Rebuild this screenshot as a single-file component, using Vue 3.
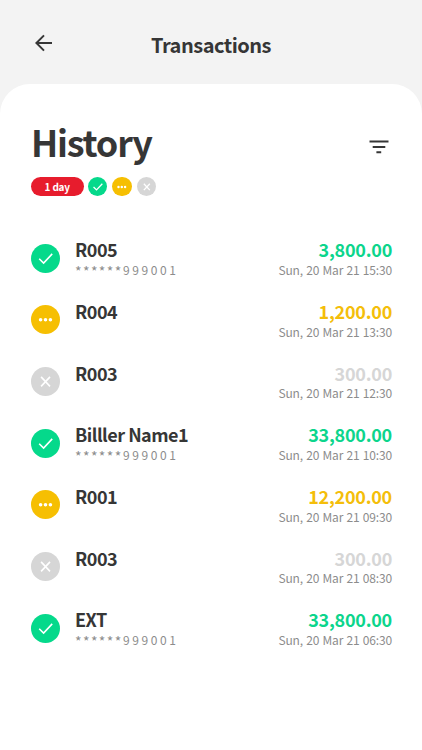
<template>
  <div class="screen">
    <header class="top-bar">
      <button class="icon-button back" aria-label="Back">
        <svg width="18" height="18" viewBox="0 0 18 18">
          <path d="M17 9H1.5M9 1.4L1.4 9L9 16.6" />
        </svg>
      </button>
      <h1 class="page-title">Transactions</h1>
    </header>

    <main class="panel">
      <div class="heading">
        <h2 class="heading-title">History</h2>
        <button class="icon-button" aria-label="Filter">
          <svg class="filter-icon" width="20" height="14" viewBox="0 0 20 14">
            <path d="M0.5 1.5H19.5M3.7 6.9H16.3M7.4 12.2H12.2" />
          </svg>
        </button>
      </div>

      <div class="filters">
        <span class="chip">1 day</span>
        <span v-for="status in statuses" :key="status" class="status small" :class="status">
          <svg viewBox="0 0 29 29">
            <path :d="icons[status]" />
          </svg>
        </span>
      </div>

      <ul class="list">
        <li v-for="item in transactions" :key="item.date" class="row">
          <span class="status" :class="item.status">
            <svg viewBox="0 0 29 29">
              <path :d="icons[item.status]" />
            </svg>
          </span>
          <div class="details">
            <div class="name">{{ item.name }}</div>
            <div v-if="item.account" class="account">
              <span class="mask">******</span><span>{{ item.account }}</span>
            </div>
          </div>
          <div class="summary">
            <div class="amount" :class="item.status">{{ item.amount }}</div>
            <div class="date">{{ item.date }}</div>
          </div>
        </li>
      </ul>
    </main>
  </div>
</template>

<script setup>
const statuses = ['success', 'pending', 'failed'];

// Glyph drawn inside each status circle
const icons = {
  success: 'M8.2 14.7L12.6 19L21.2 9.9',
  pending: 'M9.6 14.7h.01M14.5 14.7h.01M19.4 14.7h.01',
  failed: 'M10.1 9.9L19 19.4M19 9.9L10.1 19.4'
};

const transactions = [
  { name: 'R005', account: '999001', amount: '3,800.00', date: 'Sun, 20 Mar 21 15:30', status: 'success' },
  { name: 'R004', amount: '1,200.00', date: 'Sun, 20 Mar 21 13:30', status: 'pending' },
  { name: 'R003', amount: '300.00', date: 'Sun, 20 Mar 21 12:30', status: 'failed' },
  { name: 'Billler Name1', account: '999001', amount: '33,800.00', date: 'Sun, 20 Mar 21 10:30', status: 'success' },
  { name: 'R001', amount: '12,200.00', date: 'Sun, 20 Mar 21 09:30', status: 'pending' },
  { name: 'R003', amount: '300.00', date: 'Sun, 20 Mar 21 08:30', status: 'failed' },
  { name: 'EXT', account: '999001', amount: '33,800.00', date: 'Sun, 20 Mar 21 06:30', status: 'success' }
];
</script>

<style>
body {
  margin: 0;
  background: #f3f3f3;
}
</style>

<style scoped>
.screen {
  display: flex;
  flex-direction: column;
  height: 750px;
  overflow: hidden;
  background: #f3f3f3;
  color: #363636;
  font-family: 'Noto Sans CJK SC', 'Noto Sans', sans-serif;
}

.top-bar {
  display: grid;
  grid-template-columns: 60px 1fr 60px;
  align-items: center;
  height: 84px;
  flex-shrink: 0;
  box-sizing: border-box;
  padding-top: 6px;
}

.icon-button {
  display: flex;
  padding: 0;
  border: none;
  background: none;
}

.icon-button svg {
  fill: none;
  stroke: #363636;
  stroke-width: 2;
}

.back {
  margin: -4px 0 0 34.5px;
}

.page-title {
  margin: 0;
  text-align: center;
  font-size: 20px;
  line-height: 28px;
  font-weight: 700;
  letter-spacing: -0.5px;
}

.panel {
  flex: 1;
  padding: 34px 30px 0 31px;
  border-radius: 30px 30px 0 0;
  background: #fff;
}

.heading {
  display: flex;
  justify-content: space-between;
  align-items: center;
  height: 46px;
}

.heading-title {
  margin: 0;
  font-size: 36px;
  line-height: 46px;
  font-weight: 700;
  letter-spacing: -1.2px;
}

.heading .icon-button {
  margin: 11px 3px 0 0;
}

.filters {
  display: flex;
  align-items: center;
  gap: 5px;
  height: 20px;
  margin-top: 12.7px;
}

.chip {
  width: 52.5px;
  height: 19.5px;
  margin-right: -1px;
  border-radius: 10px;
  background: #e71c2d;
  color: #fff;
  text-align: center;
  font-size: 10px;
  line-height: 19px;
  font-weight: 700;
  letter-spacing: -0.2px;
}

.status {
  display: block;
  flex-shrink: 0;
  width: 29px;
  height: 29px;
  border-radius: 50%;
}

.status.small {
  width: 19.6px;
  height: 19.6px;
}

.status svg {
  display: block;
  width: 100%;
  height: 100%;
  fill: none;
  stroke: #fff;
  stroke-width: 1.6;
}

.status.small svg {
  stroke-width: 1.9;
}

.status.pending svg,
.status.small.pending svg {
  stroke-width: 3.6;
  stroke-linecap: round;
}

.status.success {
  background: #05d98b;
}

.status.pending {
  background: #f6bf02;
}

.status.failed {
  background: #d6d6d6;
}

.list {
  margin: 41.8px 0 0;
  padding: 0;
  list-style: none;
}

.row {
  display: flex;
  height: 61.67px;
}

.row .status {
  margin: 5.1px 15px 0 0;
}

.details {
  flex: 1;
}

.name,
.amount {
  font-size: 18px;
  line-height: 22px;
  font-weight: 700;
}

.name {
  letter-spacing: -0.5px;
}

.amount {
  letter-spacing: -0.25px;
}

.account,
.date {
  padding-top: 1.6px;
  color: #8c8c8c;
  font-size: 12px;
  line-height: 16px;
}

.date {
  letter-spacing: -0.15px;
  word-spacing: 0.75px;
}

.account {
  display: flex;
  letter-spacing: 2.6px;
}

.mask {
  width: 48px;
  padding-top: 1px;
  font-size: 14px;
  letter-spacing: 1.4px;
}

.summary {
  text-align: right;
}

.amount.success {
  color: #0cd58c;
}

.amount.pending {
  color: #f4be0a;
}

.amount.failed {
  color: #d6d6d6;
}
</style>
